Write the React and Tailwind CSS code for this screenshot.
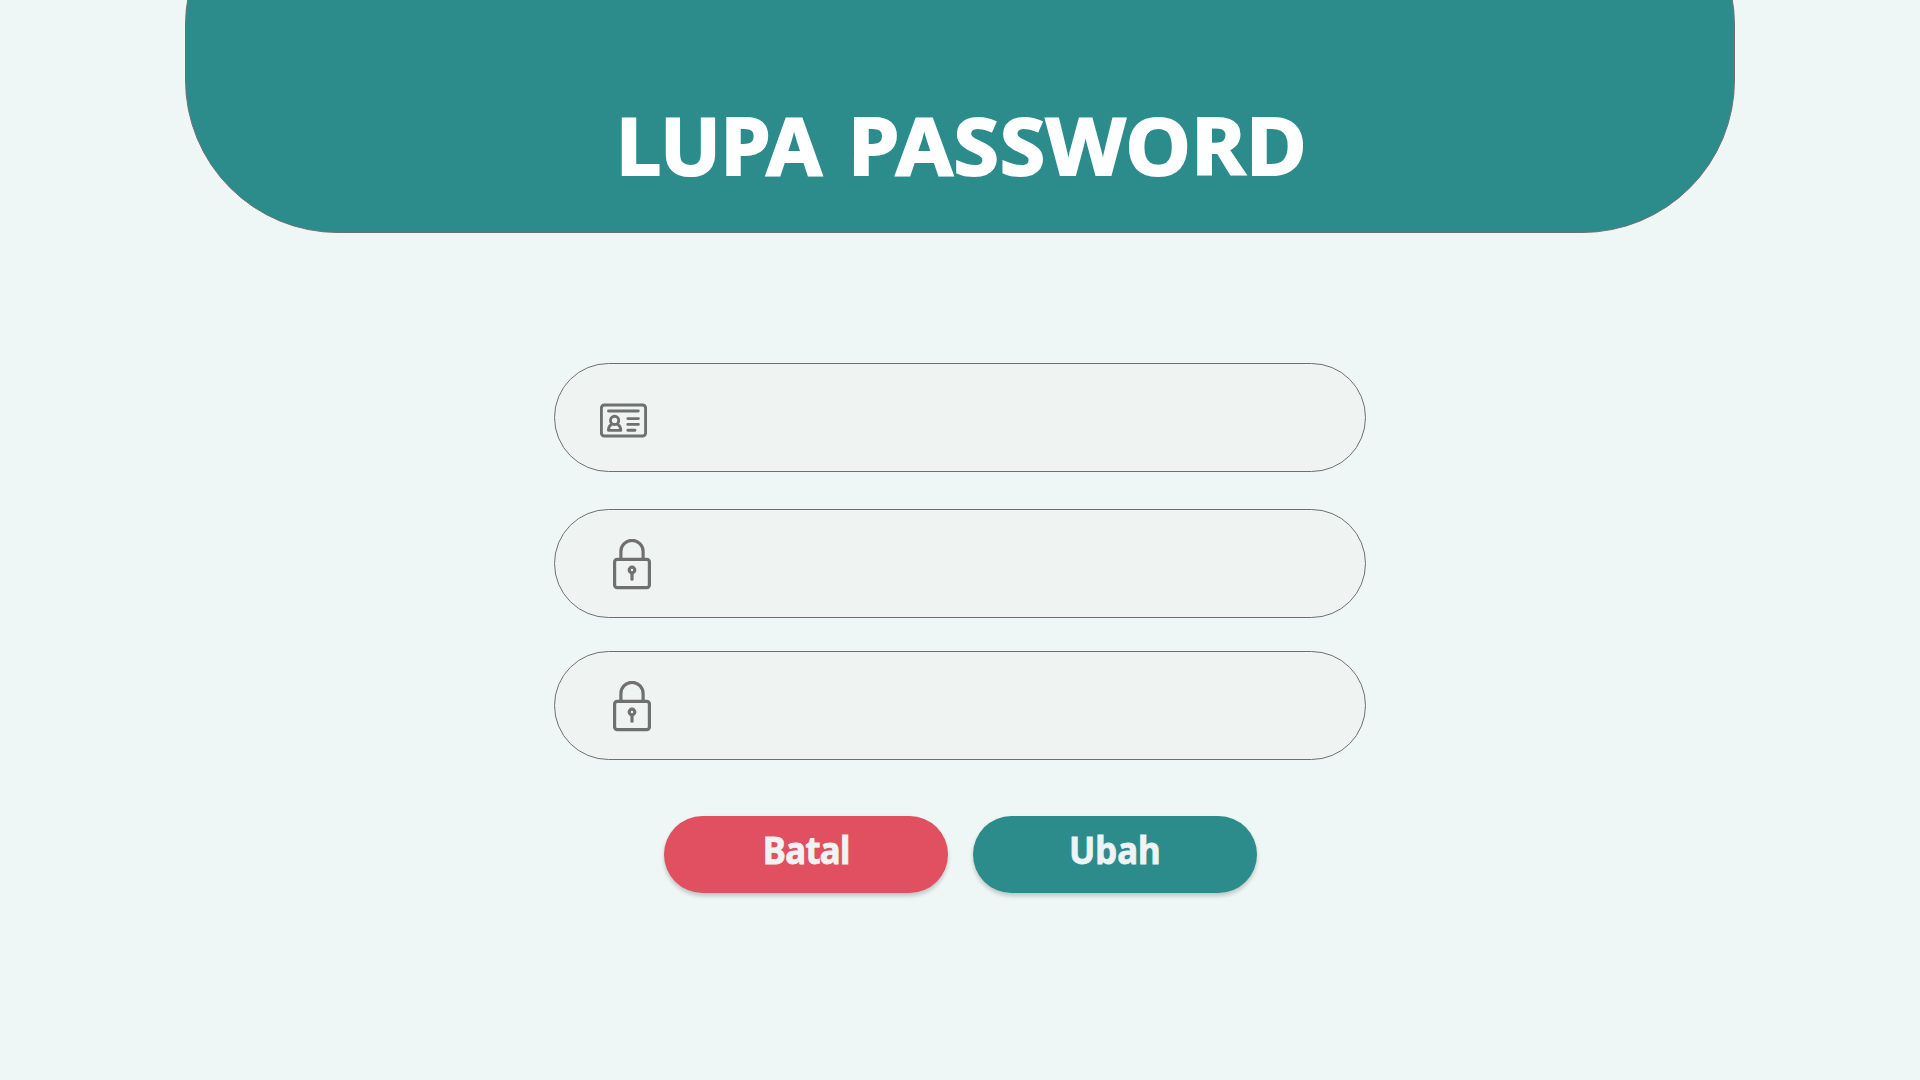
function IdCardIcon() {
  return (
    <svg className="ml-[45px] mt-[39px] h-[35px] w-[47px]" viewBox="0 0 47 35" fill="none" stroke="#707070" strokeWidth="2.9" strokeLinecap="round" strokeLinejoin="round">
      <rect x="1.4" y="2" width="44.2" height="31" rx="3" />
      <path d="M8.5 8H38.3M27.8 15.6H38.4M27.8 21.4H38.4M27.8 27.3H35" />
      <circle cx="14.6" cy="17.4" r="4.1" />
      <path d="M11.8 21.2C9.4 22.4 8.5 24.2 8.4 27.4H20.8C20.7 24.2 19.8 22.4 17.4 21.2" />
    </svg>
  );
}

function LockIcon() {
  return (
    <svg className="ml-[58px] mt-[29px] h-[51px] w-[38px]" viewBox="0 0 38 51" fill="none" stroke="#707070" strokeWidth="3.2" strokeLinecap="round" strokeLinejoin="round">
      <rect x="1.6" y="20.3" width="34.8" height="28.4" rx="2.6" />
      <path d="M7.9 20V12.5A11.1 11.1 0 0 1 30.1 12.5V20" />
      <circle cx="19" cy="31" r="2.8" />
      <path d="M19 34V40.2" />
    </svg>
  );
}

function Field({ label, type, className, children }) {
  return (
    <label className={`flex h-[109px] w-[812px] items-start overflow-hidden rounded-full border border-[#707070] bg-[#eff3f2] ${className}`}>
      {children}
      <input type={type} aria-label={label} className="ml-6 h-full min-w-0 flex-1 bg-transparent pr-12 text-3xl text-[#707070] outline-none" />
    </label>
  );
}

function Button({ className, children }) {
  return (
    <button type="button" className={`flex h-[77px] w-[284px] items-start justify-center rounded-full pt-[8px] text-[37px] leading-[52px] font-bold text-[#f0f3f3] shadow-[0_3px_4px_rgba(0,0,0,0.2)] [-webkit-text-stroke:0.8px_#f0f3f3] ${className}`}>
      <span className="inline-block scale-x-[0.94]">{children}</span>
    </button>
  );
}

export default function App() {
  return (
    <main className="flex h-screen w-full flex-col items-center overflow-hidden bg-[#eef6f6] font-['Noto_Sans',sans-serif]">
      <header className="-mt-[128px] flex h-[361px] w-[1550px] shrink-0 items-end justify-center rounded-[153px] border border-[#707070] bg-[#2b8c8b] pb-[34px]">
        <h1 className="pr-[12px] text-[79px] leading-[106px] font-bold whitespace-nowrap text-white [-webkit-text-stroke:2px_white]">
          <span className="mr-[3px] inline-block origin-right scale-x-[1.02] tracking-[-0.3px]">LUPA</span>{" "}
          <span className="ml-[3px] inline-block origin-left scale-x-[1.045] tracking-[0.6px]">PASSWORD</span>
        </h1>
      </header>
      <form className="flex flex-col items-center">
        <Field label="ID" type="text" className="mt-[130px]"><IdCardIcon /></Field>
        <Field label="Password" type="password" className="mt-[37px]"><LockIcon /></Field>
        <Field label="Konfirmasi password" type="password" className="mt-[33px]"><LockIcon /></Field>
        <div className="mt-[56px] flex gap-[25px] pl-px">
          <Button className="bg-[#e05060] tracking-[-0.7px]">Batal</Button>
          <Button className="bg-[#2b8c8b]">Ubah</Button>
        </div>
      </form>
    </main>
  );
}
